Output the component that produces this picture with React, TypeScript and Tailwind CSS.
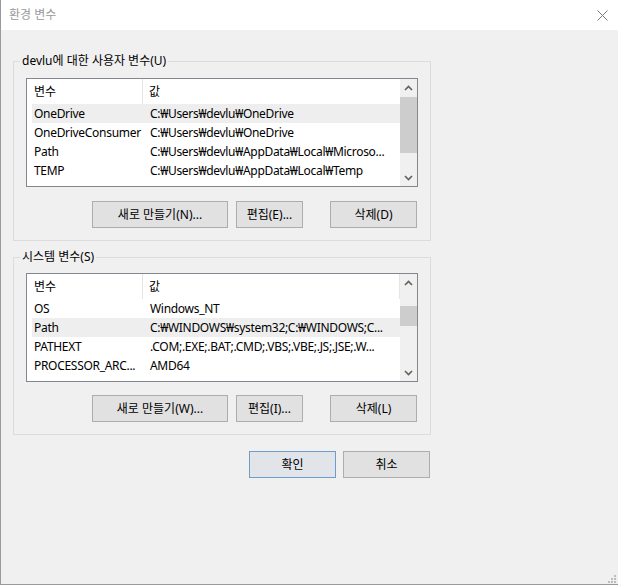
import { ReactNode } from "react";

type Row = { name: string; value: string; selected?: boolean };

const userVars: Row[] = [
  { name: "OneDrive", value: "C:₩Users₩devlu₩OneDrive", selected: true },
  { name: "OneDriveConsumer", value: "C:₩Users₩devlu₩OneDrive" },
  { name: "Path", value: "C:₩Users₩devlu₩AppData₩Local₩Microso..." },
  { name: "TEMP", value: "C:₩Users₩devlu₩AppData₩Local₩Temp" },
];

const systemVars: Row[] = [
  { name: "OS", value: "Windows_NT" },
  { name: "Path", value: "C:₩WINDOWS₩system32;C:₩WINDOWS;C...", selected: true },
  { name: "PATHEXT", value: ".COM;.EXE;.BAT;.CMD;.VBS;.VBE;.JS;.JSE;.W..." },
  { name: "PROCESSOR_ARC...", value: "AMD64" },
];

function Chevron({ down }: { down?: boolean }) {
  return (
    <svg width="9" height="6" viewBox="0 0 9 6" className={down ? "rotate-180" : ""}>
      <polyline points="1,5 4.5,1.5 8,5" fill="none" stroke="#606060" strokeWidth="1.6" />
    </svg>
  );
}

function ListView({
  rows,
  thumbTop,
  thumbHeight,
  headerEdge,
}: {
  rows: Row[];
  thumbTop: string;
  thumbHeight: string;
  headerEdge?: boolean;
}) {
  return (
    <div className="flex h-[109px] w-[392px] border border-[#828790] bg-white">
      <div className="flex-1 overflow-hidden">
        <div className={`flex h-[25px] items-center pl-[5px] ${headerEdge ? "border-r border-[#e5e5e5]" : ""}`}>
          <div className="w-[110px] pl-[2px]">변수</div>
          <div className="h-full w-px bg-[#e5e5e5]" />
          <div className="pl-[6px]">값</div>
        </div>
        <div className="pl-[5px] tracking-[-0.3px]">
          {rows.map((r) => (
            <div
              key={r.name}
              className={`flex h-[19px] items-center whitespace-nowrap ${r.selected ? "bg-[#eeeeee]" : ""}`}
            >
              <div className="w-[111px] overflow-hidden pl-[2px]">{r.name}</div>
              <div className="flex-1 overflow-hidden pl-[7px]">{r.value}</div>
            </div>
          ))}
        </div>
      </div>
      <div className="flex w-[17px] flex-col bg-[#f0f0f0]">
        <div className="flex h-[17px] items-center justify-center">
          <Chevron />
        </div>
        <div className={`${thumbTop} ${thumbHeight} bg-[#cdcdcd]`} />
        <div className="flex-1" />
        <div className="flex h-[17px] items-center justify-center">
          <Chevron down />
        </div>
      </div>
    </div>
  );
}

function Button({ children, width, primary }: { children: ReactNode; width: string; primary?: boolean }) {
  return (
    <button
      className={`${width} h-[27px] border ${
        primary ? "border-[#6f9dcb] bg-[#e1e4e8]" : "border-[#adadad] bg-[#e1e1e1]"
      } text-[12px] leading-none text-black`}
    >
      {children}
    </button>
  );
}

function GroupBox({
  label,
  top,
  children,
}: {
  label: string;
  top: string;
  children: ReactNode;
}) {
  return (
    <fieldset className={`w-[417px] border border-[#dcdcdc] px-[12px] pb-[12px] ${top}`}>
      <legend className="-ml-[6px] px-[2px] leading-[16px]">{label}</legend>
      {children}
    </fieldset>
  );
}

export default function App() {
  return (
    <div className="relative flex h-[585px] w-[618px] flex-col border-b border-l border-[#9a9a9a] bg-[#f0f0f0] font-['Noto_Sans','Noto_Sans_CJK_KR',sans-serif] text-[12px] text-black">
      <div className="flex h-[30px] items-center justify-between bg-white pl-[8px] pr-[10px]">
        <span className="text-[12px] text-[#9a9a9a]">환경 변수</span>
        <svg width="11" height="11" viewBox="0 0 11 11">
          <path d="M0.5 0.5 L10.5 10.5 M10.5 0.5 L0.5 10.5" stroke="#7a7a7a" strokeWidth="1" />
        </svg>
      </div>

      <div className="flex flex-col pl-[12px]">
        <GroupBox label="devlu에 대한 사용자 변수(U)" top="mt-[23px]">
          <div className="pt-[9px]">
            <ListView rows={userVars} thumbTop="mt-[1px]" thumbHeight="h-[56px]" />
          </div>
          <div className="mt-[14px] flex pl-[66px]">
            <Button width="w-[136px]">새로 만들기(N)...</Button>
            <div className="ml-[8px]">
              <Button width="w-[67px]">편집(E)...</Button>
            </div>
            <div className="ml-[27px]">
              <Button width="w-[87px]">삭제(D)</Button>
            </div>
          </div>
        </GroupBox>

        <GroupBox label="시스템 변수(S)" top="mt-[8px]">
          <div className="pt-[8px]">
            <ListView rows={systemVars} thumbTop="mt-[15px]" thumbHeight="h-[20px]" headerEdge />
          </div>
          <div className="mt-[13px] flex pl-[66px]">
            <Button width="w-[136px]">새로 만들기(W)...</Button>
            <div className="ml-[8px]">
              <Button width="w-[67px]">편집(I)...</Button>
            </div>
            <div className="ml-[27px]">
              <Button width="w-[87px]">삭제(L)</Button>
            </div>
          </div>
        </GroupBox>

        <div className="mt-[16px] flex w-[417px] justify-end gap-[7px]">
          <Button width="w-[87px]" primary>
            확인
          </Button>
          <Button width="w-[87px]">취소</Button>
        </div>
      </div>

      <svg width="9" height="9" viewBox="0 0 9 9" className="absolute bottom-[1px] right-[2px]">
        <g fill="#bcbcbc">
          <rect x="7" y="1" width="2" height="2" />
          <rect x="4" y="4" width="2" height="2" />
          <rect x="7" y="4" width="2" height="2" />
          <rect x="1" y="7" width="2" height="2" />
          <rect x="4" y="7" width="2" height="2" />
          <rect x="7" y="7" width="2" height="2" />
        </g>
      </svg>
    </div>
  );
}
